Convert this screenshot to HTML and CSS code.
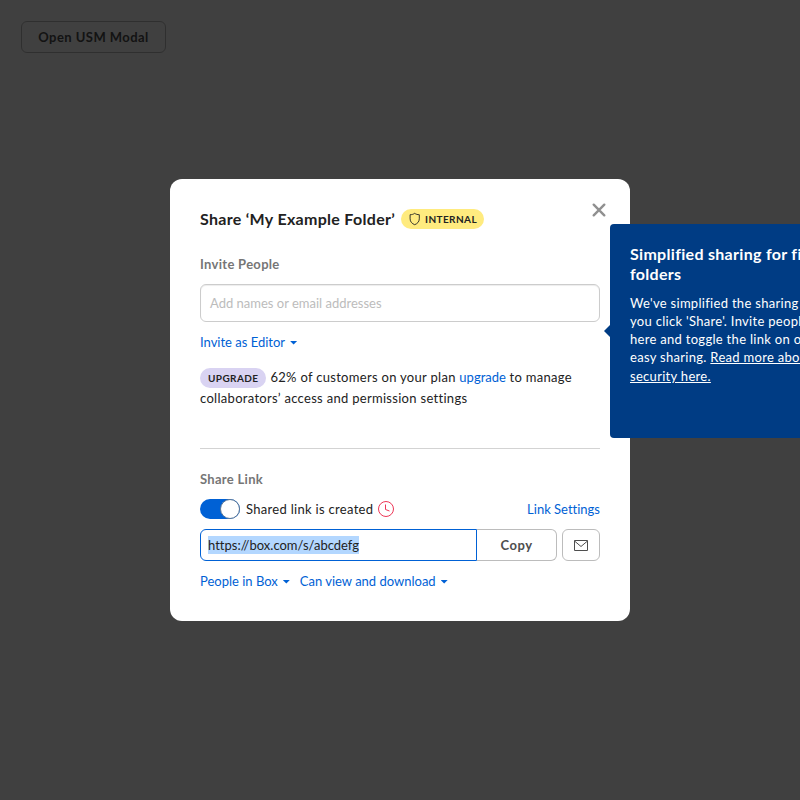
FILE: index.html
```html
<!DOCTYPE html>
<html lang="en">
<head>
<meta charset="utf-8">
<title>Share</title>
<link rel="stylesheet" href="styles.css">
</head>
<body>
<main class="page">
  <button class="btn open-btn">Open USM Modal</button>
</main>
<div class="backdrop">
  <section class="modal" role="dialog" aria-modal="true">
    <button class="close" aria-label="Close">
      <svg width="14" height="14" viewBox="0 0 14 14"><path d="M1.7 1.7l10.6 10.6M12.3 1.7L1.7 12.3" stroke="#909090" stroke-width="2.4" stroke-linecap="round"/></svg>
    </button>
    <header class="header">
      <h1 class="title">Share ‘My Example Folder’</h1>
      <span class="badge badge-internal">
        <svg width="12" height="14" viewBox="0.300 0 12 14" fill="none" stroke="#222"><path d="M6 1.3C4.700 2.300 3.100 2.700 1.400 2.700V6.800C1.400 9.800 3.400 11.700 6 12.700C8.600 11.700 10.600 9.800 10.600 6.800V2.700C8.900 2.700 7.300 2.300 6 1.300Z" stroke-width=".9"/></svg>
        INTERNAL
      </span>
    </header>
    <label class="label">Invite People</label>
    <div class="invite-input">Add names or email addresses</div>
    <a class="link menu invite-menu">Invite as Editor<i class="caret"></i></a>
    <p class="upsell"><span class="badge badge-upgrade">UPGRADE</span>62% of customers on your plan <a class="link inline-link">upgrade</a> to manage collaborators’ access and permission settings</p>
    <hr class="divider">
    <div class="label">Share Link</div>
    <div class="toggle-row">
      <span class="toggle"><span class="knob"></span></span>
      <span class="toggle-label">Shared link is created</span>
      <svg width="16" height="16" viewBox="0 0 16 16" fill="none" stroke="#ed3757"><circle cx="8" cy="8" r="7.5"/><path d="M7.500 3.500V8.500L11.500 10"/></svg>
      <a class="link settings">Link Settings</a>
    </div>
    <div class="link-row">
      <div class="url"><span class="selected">https://box.com/s/abcdefg</span></div>
      <button class="btn copy">Copy</button>
      <button class="btn mail" aria-label="Email">
        <svg width="14" height="11" viewBox="0 0 14 11" fill="none" stroke="#4e4e4e"><path d="M.5.5h13v10H.5z"/><path d="M.5 1L7 6.500 13.500 1"/></svg>
      </button>
    </div>
    <div class="access-row">
      <a class="link menu">People in Box<i class="caret"></i></a>
      <a class="link menu">Can view and download<i class="caret"></i></a>
    </div>
  </section>
  <aside class="tooltip">
    <h2 class="tip-title">Simplified sharing for files and folders</h2>
    <p class="tip-text">We've simplified the sharing experience when<br>you click 'Share'. Invite people to this item<br>here and toggle the link on or off below for<br>easy sharing. <a class="tip-link">Read more about shared link</a></p>
    <p class="tip-text tip-last"><a class="tip-link">security here.</a></p>
  </aside>
</div>
</body>
</html>
```
FILE: styles.css
```css
* { box-sizing: border-box; }
html, body { height: 100%; overflow: hidden; }
body {
  margin: 0;
  font: 13px/20px Lato, "Liberation Sans", sans-serif;
  font-variant-ligatures: none;
  letter-spacing: .3px;
  color: #222;
  background: #fff;
}
.page { padding: 21px; }
.btn {
  height: 32px;
  padding: 0 16px;
  font: bold 13px/30px Lato, sans-serif;
  letter-spacing: .5px;
  color: #4e4e4e;
  background: #fff;
  border: 1px solid #bcbcbc;
  border-radius: 6px;
}
.open-btn { width: 145px; letter-spacing: .45px; }
.backdrop {
  position: fixed;
  inset: 0;
  display: flex;
  align-items: center;
  justify-content: center;
  background: rgba(0, 0, 0, .75);
}
.modal {
  position: relative;
  width: 460px;
  height: 442px;
  padding: 30px;
  background: #fff;
  border-radius: 12px;
}
.close {
  position: absolute;
  top: 24px;
  right: 24px;
  width: 14px;
  height: 14px;
  padding: 0;
  border: 0;
  background: none;
}
.close svg { display: block; }
.header { display: flex; align-items: center; height: 20px; }
.title { margin: 0; font-size: 16px; line-height: 20px; letter-spacing: .3px; }
.badge {
  display: inline-flex;
  align-items: center;
  height: 20px;
  padding: 0 8px;
  border-radius: 10px;
  font-size: 10px;
  font-weight: bold;
  line-height: 20px;
  letter-spacing: .4px;
}
.badge-internal { margin-left: 6px; gap: 4px; padding-right: 7.5px; background: #ffeb7f; }
.badge-upgrade { margin-right: 4px; background: #d9d3f2; vertical-align: 0; }
.label { display: block; margin-top: 25px; font-weight: bold; color: #767676; }
.invite-input {
  height: 38px;
  margin-top: 10px;
  padding: 0 9px;
  line-height: 36px;
  letter-spacing: 0;
  color: #bcbcbc;
  border: 1px solid #ccc;
  border-radius: 6px;
  box-shadow: inset 0 1px 1px rgba(0, 0, 0, .075);
}
.link { color: #0061d5; }
.inline-link { letter-spacing: 0; }
.menu { display: inline-flex; align-items: center; letter-spacing: 0; }
.invite-menu { display: flex; margin-top: 10px; }
.caret {
  width: 7px;
  height: 4px;
  margin: 1px 0 0 5px;
  background: #0061d5;
  clip-path: polygon(0 0, 100% 0, 100% 12%, 50% 100%, 0 12%);
}
.upsell { height: 42px; margin: 15px 0 0; line-height: 21px; }
.divider { height: 1px; margin: 39px 0 0; border: 0; background: #d3d3d3; }
.divider + .label { margin-top: 20px; }
.toggle-row { display: flex; align-items: center; height: 20px; margin-top: 10px; }
.toggle {
  display: flex;
  justify-content: flex-end;
  width: 40px;
  height: 20px;
  margin-right: 6px;
  border-radius: 10px;
  background: #0061d5;
}
.knob { width: 20px; height: 20px; border: 1px solid #5a7696; border-radius: 50%; background: #fff; }
.toggle-label { margin-right: 5px; }
.settings { margin-left: auto; letter-spacing: 0; }
.link-row { display: flex; height: 32px; margin-top: 10px; }
.url {
  width: 277px;
  padding: 6px 7px;
  line-height: 18px;
  letter-spacing: 0;
  border: 1px solid #0061d5;
  border-radius: 6px 0 0 6px;
}
.selected { display: inline-block; height: 18px; background: #b3d7ff; }
.copy { width: 80px; border-left: 0; border-radius: 0 6px 6px 0; }
.mail { display: flex; align-items: center; justify-content: center; width: 38px; margin-left: 5px; padding: 0; }
.access-row { display: flex; gap: 10px; margin-top: 10px; }
.tooltip {
  position: absolute;
  left: 610px;
  top: 224px;
  width: 320px;
  height: 214px;
  padding: 20px;
  color: #fff;
  background: #003c84;
  border-radius: 4px;
}
.tooltip::before {
  content: "";
  position: absolute;
  left: -6px;
  top: 101px;
  border: 6px solid transparent;
  border-right-color: #003c84;
  border-left: 0;
}
.tip-title { width: 240px; margin: 0 0 10px; font-size: 16px; line-height: 20px; letter-spacing: .3px; }
.tip-text { margin: 0; line-height: 18px; white-space: nowrap; letter-spacing: .3px; }
.tip-last { margin-top: 1px; }
.tip-link { text-decoration: underline; }
```
